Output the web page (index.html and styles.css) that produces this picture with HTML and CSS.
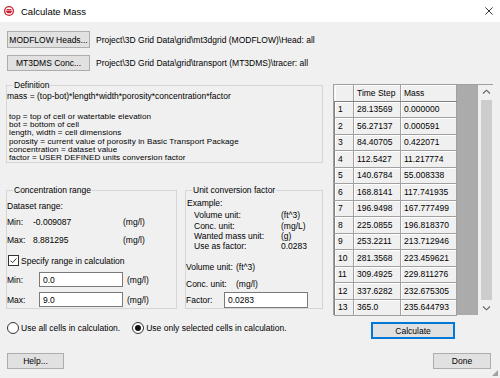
FILE: index.html
```html
<!DOCTYPE html>
<html>
<head>
<meta charset="utf-8">
<title>Calculate Mass</title>
<link rel="stylesheet" href="styles.css">
</head>
<body>
<div class="titlebar">
  <svg class="app-icon" viewBox="0 0 10 10"><circle cx="5" cy="5" r="5" fill="#c8202e"/><circle cx="5" cy="5" r="3.7" fill="#fff"/><path d="M2.1 4.4 H7.9 A2.9 2.9 0 0 1 2.1 4.4Z" fill="#c8202e"/><rect x="2.6" y="3" width="4.8" height="0.9" fill="#c8202e"/></svg>
  <span class="title">Calculate Mass</span>
  <svg class="close" viewBox="0 0 9 9"><path d="M0.5 0.5 L8.5 8.5 M8.5 0.5 L0.5 8.5" stroke="#000" stroke-width="0.9" fill="none"/></svg>
</div>
<div class="body">
  <div class="file-row">
    <button class="btn file-btn">MODFLOW Heads...</button>
    <span class="path">Project\3D Grid Data\grid\mt3dgrid (MODFLOW)\Head: all</span>
  </div>
  <div class="file-row r2">
    <button class="btn file-btn">MT3DMS Conc...</button>
    <span class="path">Project\3D Grid Data\grid\transport (MT3DMS)\tracer: all</span>
  </div>
  <div class="main">
    <div class="left">
      <fieldset class="group def">
        <legend>Definition</legend>
        <div class="formula">mass = (top-bot)*length*width*porosity*concentration*factor</div>
        <div class="defs">
          <div>top = top of cell or watertable elevation</div>
          <div>bot = bottom of cell</div>
          <div>length, width = cell dimensions</div>
          <div>porosity = current value of porosity in Basic Transport Package</div>
          <div>concentration = dataset value</div>
          <div>factor = USER DEFINED units conversion factor</div>
        </div>
      </fieldset>
      <div class="groups">
        <fieldset class="group conc">
          <legend>Concentration range</legend>
          <div class="line">Dataset range:</div>
          <div class="kv kv-min"><span>Min:</span><span>-0.009087</span><span>(mg/l)</span></div>
          <div class="kv kv-max"><span>Max:</span><span>8.881295</span><span>(mg/l)</span></div>
          <div class="check-row"><span class="checkbox"><svg viewBox="0 0 10 10"><path d="M1.8 5.2 L4 7.4 L8.3 2.6" stroke="#222" stroke-width="1" fill="none"/></svg></span><span>Specify range in calculation</span></div>
          <div class="in-row in-min"><span>Min:</span><input class="field" value="0.0"><span>(mg/l)</span></div>
          <div class="in-row in-max"><span>Max:</span><input class="field" value="9.0"><span>(mg/l)</span></div>
        </fieldset>
        <fieldset class="group unit">
          <legend>Unit conversion factor</legend>
          <div class="line ex-title">Example:</div>
          <div class="example">
            <span>Volume unit:</span><span>(ft^3)</span>
            <span>Conc. unit:</span><span>(mg/L)</span>
            <span>Wanted mass unit:</span><span>(g)</span>
            <span>Use as factor:</span><span>0.0283</span>
          </div>
          <div class="uv uv-vol"><span>Volume unit:</span><span>(ft^3)</span></div>
          <div class="uv uv-conc"><span>Conc. unit:</span><span>(mg/l)</span></div>
          <div class="factor-row"><span>Factor:</span><input class="field factor" value="0.0283"></div>
        </fieldset>
      </div>
      <div class="radios">
        <span class="radio"></span><span class="rlabel">Use all cells in calculation.</span>
        <span class="radio on"></span><span class="rlabel">Use only selected cells in calculation.</span>
      </div>
    </div>
    <div class="right">
      <div class="grid">
        <table class="tbl">
          <thead>
            <tr><th class="rh"></th><th class="c1">Time Step</th><th class="c2">Mass</th></tr>
          </thead>
          <tbody>
            <tr><td class="rh">1</td><td>28.13569</td><td>0.000000</td></tr>
            <tr><td class="rh">2</td><td>56.27137</td><td>0.000591</td></tr>
            <tr><td class="rh">3</td><td>84.40705</td><td>0.422071</td></tr>
            <tr><td class="rh">4</td><td>112.5427</td><td>11.217774</td></tr>
            <tr><td class="rh">5</td><td>140.6784</td><td>55.008338</td></tr>
            <tr><td class="rh">6</td><td>168.8141</td><td>117.741935</td></tr>
            <tr><td class="rh">7</td><td>196.9498</td><td>167.777499</td></tr>
            <tr><td class="rh">8</td><td>225.0855</td><td>196.818370</td></tr>
            <tr><td class="rh">9</td><td>253.2211</td><td>213.712946</td></tr>
            <tr><td class="rh">10</td><td>281.3568</td><td>223.459621</td></tr>
            <tr><td class="rh">11</td><td>309.4925</td><td>229.811276</td></tr>
            <tr><td class="rh">12</td><td>337.6282</td><td>232.675305</td></tr>
            <tr><td class="rh">13</td><td>365.0</td><td>235.644793</td></tr>
          </tbody>
        </table>
        <div class="filler"></div>
        <div class="vscroll">
          <svg class="arrow" viewBox="0 0 9 6"><path d="M1 4.5 L4.5 1.2 L8 4.5" stroke="#606060" stroke-width="1.1" fill="none"/></svg>
          <div class="thumb"></div>
          <svg class="arrow" viewBox="0 0 9 6"><path d="M1 1.5 L4.5 4.8 L8 1.5" stroke="#606060" stroke-width="1.1" fill="none"/></svg>
        </div>
      </div>
      <button class="btn calc">Calculate</button>
    </div>
  </div>
  <div class="footer">
    <button class="btn help">Help...</button>
    <button class="btn done">Done</button>
  </div>
</div>
<div class="grip"></div>
</body>
</html>
```
FILE: styles.css
```css
* { box-sizing: border-box; }
html, body { margin: 0; padding: 0; }
body {
  width: 500px;
  height: 378px;
  background: #f0f0f0;
  font-family: "Liberation Sans", Arial, sans-serif;
  font-size: 8.5px;
  color: #000;
  overflow: hidden;
  position: relative;
}
.titlebar {
  height: 22px;
  background: #fff;
  display: flex;
  align-items: center;
  padding-left: 4px;
}
.app-icon { width: 10px; height: 10px; flex: none; }
.title { font-size: 9.5px; margin-left: 7px; }
.close { margin-left: auto; margin-right: 7px; width: 8px; height: 8px; }
.body { padding: 9px 8px 0 6px; }
.file-row { display: flex; align-items: center; }
.r2 { margin-top: 7px; }
.btn {
  font: inherit;
  color: #000;
  background: #e1e1e1;
  border: 1px solid #adadad;
  padding: 0;
  height: 17px;
}
.file-btn { width: 83px; margin-left: 1px; flex: none; }
.r2 .file-btn { height: 16px; }
.path { margin-left: 6px; white-space: nowrap; }

.main { display: flex; margin-top: 9px; }
.left { width: 317px; flex: none; }
.right {
  width: 160px;
  margin-left: 10px;
  margin-top: 4px;
  display: flex;
  flex-direction: column;
  align-items: center;
}

fieldset.group {
  margin: 0;
  padding: 0;
  border: 1px solid #d5d5d5;
  min-width: 0;
}
legend { padding: 0 1px; margin-left: 6px; line-height: 10px; }

.def { padding: 0 0 21px 7px; }
.formula { line-height: 10px; margin-top: 1px; white-space: nowrap; }
.defs {
  margin-top: 12px;
  padding-left: 2px;
  font-size: 8.1px;
  letter-spacing: 0.08px;
  line-height: 8.2px;
  white-space: nowrap;
}

.groups { display: flex; gap: 8px; margin-top: 22px; }
.conc { width: 171px; padding: 0 0 6px 9px; }
.unit { width: 138px; padding: 0 0 5px 8px; }
.line { line-height: 10px; }
.conc .line { margin-top: 6px; }
.kv { display: grid; grid-template-columns: 26px 90px auto; line-height: 10px; }
.kv-min { margin-top: 6px; }
.kv-max { margin-top: 8px; }
.check-row { display: flex; align-items: center; height: 11px; margin-top: 10px; padding-left: 1px; }
.checkbox {
  width: 11px; height: 11px;
  border: 1px solid #333;
  background: #fff;
  margin-right: 2px;
  display: flex;
}
.checkbox svg { width: 9px; height: 9px; }
.in-row { display: grid; grid-template-columns: 28px 84px auto; column-gap: 4px; align-items: center; }
.in-min { margin-top: 6px; }
.in-max { margin-top: 5px; }
.field {
  font: inherit;
  color: #000;
  height: 15px;
  border: 1px solid #7a7a7a;
  background: #fff;
  padding: 0 3px;
  width: 100%;
  margin: 0;
}

.ex-title { margin-top: 3px; padding-left: 1px; }
.example {
  display: grid;
  grid-template-columns: 87px auto;
  padding-left: 8px;
  margin-top: 2px;
  line-height: 10.3px;
}
.uv { display: grid; grid-template-columns: 50px auto; line-height: 10px; }
.uv-vol { margin-top: 11px; }
.uv-conc { margin-top: 7px; }
.factor-row { display: flex; align-items: center; margin-top: 3px; }
.factor-row span { width: 38px; }
.field.factor { width: 84px; height: 16px; }

.radios { display: flex; align-items: center; margin-top: 13px; padding-left: 1px; height: 12px; }
.radio {
  width: 12px; height: 12px;
  border: 1px solid #333;
  border-radius: 50%;
  background: #fff;
  flex: none;
  position: relative;
}
.radio.on::after {
  content: "";
  position: absolute;
  left: 2px; top: 2px;
  width: 6px; height: 6px;
  border-radius: 50%;
  background: #111;
}
.rlabel { margin-left: 2px; margin-right: 12px; }

.grid {
  display: flex;
  width: 160px;
  height: 231px;
  border-top: 1px solid #a0a0a0;
  border-left: 1px solid #a0a0a0;
  background: #f0f0f0;
}
.tbl { border-collapse: collapse; table-layout: fixed; width: 122px; align-self: flex-start; }
.tbl th, .tbl td {
  font-weight: normal;
  text-align: left;
  padding: 0 0 0 3px;
  border-right: 1px solid #a0a0a0;
  border-bottom: 1px solid #a0a0a0;
  box-shadow: inset 1px 1px 0 #fff;
  white-space: nowrap;
  overflow: hidden;
}
.tbl th { height: 16px; border-bottom-color: #808080; }
.tbl td { height: 16.5px; }
.tbl .rh { width: 19px; }
.tbl td.rh { border-left: 1px solid #808080; }
.tbl .c1 { width: 47px; }
.tbl .c2 { width: 56px; }
.filler { width: 21px; background: #ababab; flex: none; }
.vscroll {
  width: 17px;
  flex: none;
  background: #f0f0f0;
  display: flex;
  flex-direction: column;
  align-items: center;
}
.arrow { width: 9px; height: 6px; margin: 4px 0; flex: none; }
.thumb { width: 11px; flex: 1; background: #cdcdcd; margin: 1px 0; }

.calc { width: 84px; margin-top: 7px; border: 1px solid #0078d7; box-shadow: inset 0 0 0 1px #0078d7; }

.footer { display: flex; justify-content: space-between; margin-top: 14px; }
.help { width: 57px; height: 16px; margin-left: 1px; }
.done { width: 58px; height: 16px; margin-right: 1px; }

.grip {
  position: absolute;
  right: 2px; bottom: 2px;
  width: 6px; height: 6px;
  background:
    radial-gradient(circle, #a0a0a0 0.8px, transparent 1px) 0 0 / 2px 2px;
  clip-path: polygon(100% 0, 100% 100%, 0 100%);
}
```
